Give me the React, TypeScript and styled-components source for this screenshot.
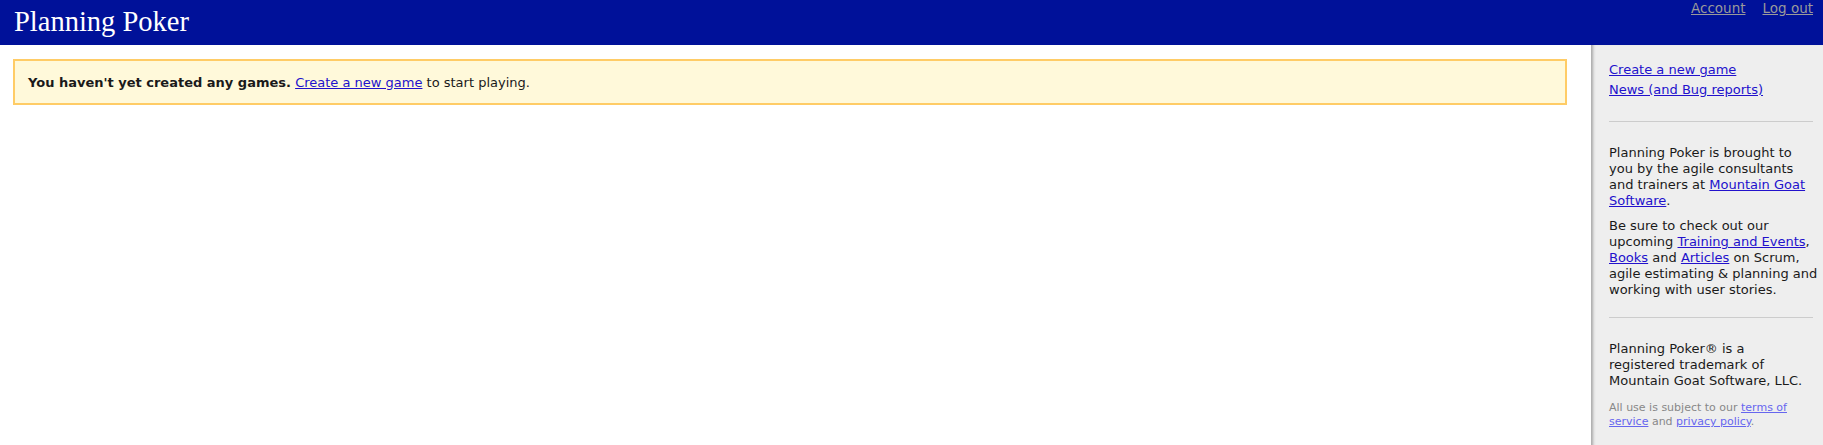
import styled, { createGlobalStyle } from "styled-components";

const GlobalStyle = createGlobalStyle`
  html, body {
    margin: 0;
    padding: 0;
    background: #ffffff;
  }
  body {
    font-family: "DejaVu Sans", Verdana, sans-serif;
    color: #1a1a1a;
  }
`;

const Header = styled.header`
  display: flex;
  justify-content: space-between;
  align-items: flex-start;
  height: 45px;
  background-color: #001199;
`;

const Title = styled.h1`
  margin: 0;
  padding-left: 14px;
  font-family: "Liberation Serif", Georgia, serif;
  font-weight: normal;
  font-size: 28.5px;
  line-height: 44px;
  color: #ffffff;
`;

const UserNav = styled.nav`
  display: flex;
  gap: 17px;
  padding-right: 10px;
  font-size: 13.5px;
  line-height: 16px;
`;

const NavLink = styled.a`
  color: #9a9a9a;
  text-decoration: underline;
`;

const Layout = styled.div`
  display: flex;
  min-height: calc(100vh - 45px);
`;

const Main = styled.main`
  flex: 1;
  padding: 14px 24px 0 13px;
`;

const Notice = styled.div`
  border: 2px solid #ffcc66;
  background-color: #fff9da;
  padding: 0 13px;
  height: 42px;
  display: flex;
  align-items: center;
  font-size: 13px;
`;

const Link = styled.a`
  color: #2211cc;
  text-decoration: underline;
`;

const Sidebar = styled.aside`
  box-sizing: border-box;
  width: 232px;
  flex-shrink: 0;
  padding: 15px 10px 0 18px;
  background-color: #eeeeee;
  box-shadow: inset 4px 0 3px -2px #a8a8a8;
`;

const SideLinks = styled.div`
  display: flex;
  flex-direction: column;
  align-items: flex-start;
  font-size: 13px;
  line-height: 20px;
  padding-bottom: 21px;
`;

const Rule = styled.hr`
  margin: 0;
  border: 0;
  border-top: 1px solid #cccccc;
`;

const Section = styled.div`
  padding: 23px 0 19px;
`;

const Para = styled.p<{ $bleed?: boolean }>`
  margin: 0 ${p => (p.$bleed ? "-5px" : "0")} 9px 0;
  font-size: 13px;
  line-height: 16px;
  color: #1a1a1a;
  &:last-child {
    margin-bottom: 0;
  }
`;

const SmallPrint = styled.p`
  margin: 12px 0 0;
  font-size: 11px;
  line-height: 14px;
  color: #888888;
`;

const SoftLink = styled.a`
  color: #6666ee;
  text-decoration: underline;
`;

export default function App() {
  return (
    <>
      <GlobalStyle />
      <Header>
        <Title>Planning Poker</Title>
        <UserNav>
          <NavLink href="#">Account</NavLink>
          <NavLink href="#">Log out</NavLink>
        </UserNav>
      </Header>
      <Layout>
        <Main>
          <Notice>
            <span>
              <b>You haven't yet created any games.</b>{" "}
              <Link href="#">Create a new game</Link> to start playing.
            </span>
          </Notice>
        </Main>
        <Sidebar>
          <SideLinks>
            <Link href="#">Create a new game</Link>
            <Link href="#">News (and Bug reports)</Link>
          </SideLinks>
          <Rule />
          <Section>
            <Para>
              Planning Poker is brought to you by the agile consultants and
              trainers at <Link href="#">Mountain Goat Software</Link>.
            </Para>
            <Para $bleed>
              Be sure to check out our upcoming{" "}
              <Link href="#">Training and Events</Link>,{" "}
              <Link href="#">Books</Link> and <Link href="#">Articles</Link> on
              Scrum, agile estimating &amp; planning and working with user
              stories.
            </Para>
          </Section>
          <Rule />
          <Section>
            <Para>
              Planning Poker® is a registered trademark of Mountain Goat
              Software, LLC.
            </Para>
            <SmallPrint>
              All use is subject to our{" "}
              <SoftLink href="#">terms of service</SoftLink> and{" "}
              <SoftLink href="#">privacy policy</SoftLink>.
            </SmallPrint>
          </Section>
        </Sidebar>
      </Layout>
    </>
  );
}
